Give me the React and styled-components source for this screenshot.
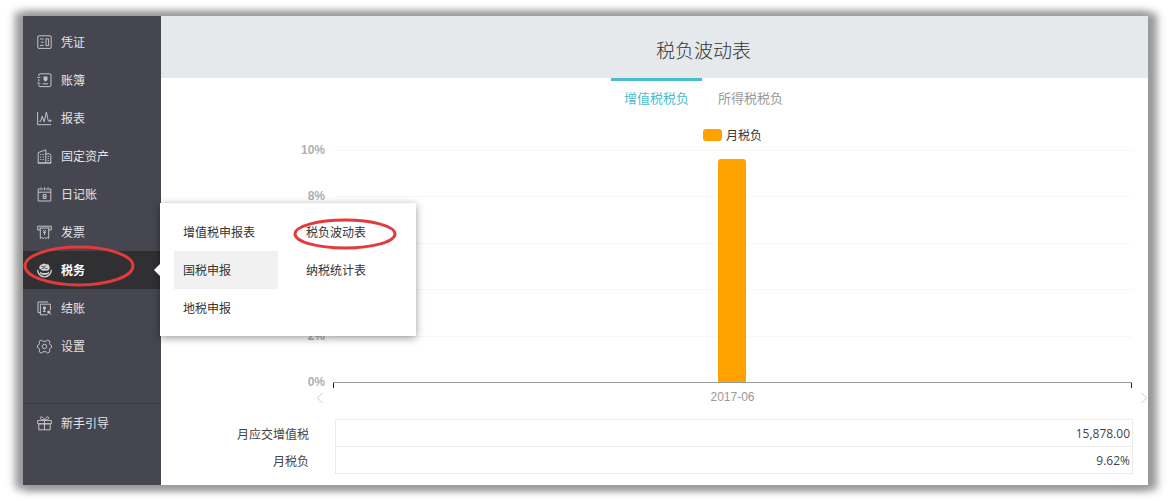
import styled, { createGlobalStyle, css } from 'styled-components'
import { useState } from 'react';

const ticks = ['10%', '8%', '6%', '4%', '2%', '0%'];
const tickGap = 46.4;
const taxMenu = ['增值税申报表', '税负波动表', '国税申报', '纳税统计表', '地税申报'];

const menuItems = [
  { name: '凭证', icon: <VoucherIcon /> },
  { name: '账簿', icon: <BookIcon /> },
  { name: '报表', icon: <ReportIcon /> },
  { name: '固定资产', icon: <AssetIcon /> },
  { name: '日记账', icon: <DiaryIcon /> },
  { name: '发票', icon: <InvoiceIcon /> },
  { name: '税务', icon: <TaxIcon />, children: taxMenu },
  { name: '结账', icon: <CloseBookIcon /> },
  { name: '设置', icon: <SettingIcon /> },
];

function App() {
  const [activeTab, setActiveTab] = useState('增值税税负');

  return (
    <Page>
      <GlobalStyle />
      <Frame>
        <Sidebar>
          <MenuList>
            {menuItems.map((item) => (
              <MenuItem key={item.name}>
                <MenuLink href="#" $active={!!item.children}>
                  {item.icon}
                  {item.name}
                </MenuLink>
                {item.children && (
                  <>
                    <ItemRing viewBox="0 0 112 42" aria-hidden="true">
                      <ellipse cx="56" cy="21" rx="54" ry="19" />
                    </ItemRing>
                    <SubMenu>
                      {item.children.map((child) => (
                        <SubLink href="#" key={child} $hover={child === '国税申报'}>
                          {child}
                          {child === '税负波动表' && (
                            <SubRing viewBox="0 0 104 32" aria-hidden="true">
                              <ellipse cx="52" cy="16" rx="50" ry="14" />
                            </SubRing>
                          )}
                        </SubLink>
                      ))}
                    </SubMenu>
                  </>
                )}
              </MenuItem>
            ))}
          </MenuList>
          <Guide>
            <MenuLink href="#">
              <GiftIcon />
              新手引导
            </MenuLink>
          </Guide>
        </Sidebar>

        <Main>
          <Header>
            <Title>税负波动表</Title>
          </Header>
          <Tabs>
            {['增值税税负', '所得税税负'].map((tab) => (
              <Tab key={tab} $active={tab === activeTab} onClick={() => setActiveTab(tab)}>
                {tab}
              </Tab>
            ))}
          </Tabs>

          <ChartGrid>
            <Legend>
              <LegendMark />
              月税负
            </Legend>
            <Plot role="img" aria-label="月税负 2017-06 9.62%">
              {ticks.map((tick, index) => {
                const y = Math.round(index * tickGap) + 1;
                return (
                  <g key={tick}>
                    {index < 5 && <line x1="0" x2="100%" y1={y + 0.5} y2={y + 0.5} stroke="#f7f7f7" />}
                    <text x="-8" y={y + 4} textAnchor="end">{tick}</text>
                  </g>
                );
              })}
              <svg x="50%" overflow="visible">
                <path d="M-14.5 233V13a3 3 0 0 1 3-3h22a3 3 0 0 1 3 3V233z" fill="#ffa200" />
              </svg>
              <rect x="0" y="233" width="100%" height="1" fill="#999" />
              <rect x="0" y="234" width="1" height="5" fill="#222" />
              <svg x="100%" overflow="visible">
                <rect x="-1" y="234" width="1" height="5" fill="#222" />
              </svg>
            </Plot>
            <Prev aria-label="上一页">
              <svg width="8" height="12" viewBox="0 0 8 12"><path d="M6.5 1L1.5 6l5 5" /></svg>
            </Prev>
            <Month>2017-06</Month>
            <Next aria-label="下一页">
              <svg width="8" height="12" viewBox="0 0 8 12"><path d="M1.5 1l5 5-5 5" /></svg>
            </Next>
          </ChartGrid>

          <DataTable>
            <tbody>
              <tr>
                <th scope="row">月应交增值税</th>
                <td>15,878.00</td>
              </tr>
              <tr>
                <th scope="row">月税负</th>
                <td>9.62%</td>
              </tr>
            </tbody>
          </DataTable>
        </Main>
      </Frame>
    </Page>
  );
}

export default App;


/* Icons */
function VoucherIcon() {
  return (
    <Icon viewBox="0 0 15 15">
      <rect x=".8" y=".8" width="13.4" height="12.6" rx="1.2" />
      <path d="M3 4h3.6M4 7.2h2.6M3 10.4h3.6M9 3.8h2.6v6.8H9z" />
    </Icon>
  );
}

function BookIcon() {
  return (
    <Icon viewBox="0 0 15 15">
      <path d="M1.8 3V2A1.2 1.2 0 0 1 3 .8h9.8A1.2 1.2 0 0 1 14 2v10.400a1.200 1.200 0 0 1-1.200 1.200H3a1.200 1.200 0 0 1-1.200-1.200v-1M1.800 6v2.600M.3 4.400h3M.3 10.200h3M5.500 10.800h5.500" />
      <path d="M6.500 3.600h4v3.200l-1.300 1.400H7.800L6.500 6.800z" fill="currentColor" stroke="none" />
    </Icon>
  );
}

function ReportIcon() {
  return (
    <Icon viewBox="0 0 15 15">
      <path d="M.6 1v12.700h13.600M2.300 10.400h1.300l1.600-5.200 2 5.600L9.400 1l1.900 9h1.300" />
      <circle cx="13.400" cy="9.700" r=".7" fill="currentColor" />
    </Icon>
  );
}

function AssetIcon() {
  return (
    <Icon viewBox="0 0 15 15">
      <path d="M1.200 14V3.600L8.800.8V14zM8.800 4.800h3.800l1.200 1.400V14H8.800M.6 14h13.800" />
      <path d="M3.200 5.500h1.200M5.700 5.500h1.200M3.200 8h1.200M5.700 8h1.200M3.200 10.500h1.200M5.700 10.500h1.200M10.600 7.500h1.200M10.600 9.500h1.200M10.600 11.500h1.200" />
    </Icon>
  );
}

function DiaryIcon() {
  return (
    <Icon viewBox="0 0 15 15">
      <path d="M3 2H1.200v12h12.600V2H12M1.200 5.200h12.600M5 2h1.200M8.600 2H10M4 .3v3M7.500.3v3M11 .3v3" />
      <path d="M6.200 7.500h2.800v4H6.200zM6.200 9.500H9" />
    </Icon>
  );
}

function InvoiceIcon() {
  return (
    <Icon viewBox="0 0 15 15">
      <path d="M3 5H.7V1.200h13.600V5H12M2.500 3h10M3.300 3v10.500l1.500-1 1.400 1 1.400-1 1.400 1 1.400-1 1.300 1V3" />
      <path d="M6 5l1.500 1.800L9 5M7.500 6.800V10M6 7.300h3" />
    </Icon>
  );
}

function TaxIcon() {
  return (
    <Icon viewBox="0 0 15 15">
      <path d="M.7 6.800c0 4 2.800 7 6.800 7s6.800-3 6.800-7" strokeWidth="1.300" />
      <path d="M3 8.600c1.600 2 7.400 2 9 0v1.700c-2 2.200-7 2.200-9 0z" fill="currentColor" stroke="none" />
      <path d="M3 2.300L6.800.6l5 1.200 1 3.100-1.500 2.500-5.800.4L2 5.300z" fill="currentColor" stroke="none" />
      <path d="M4 3l3 1 2-1.600M4.600 5.800l2.600-1 3.300 1" stroke="#303033" strokeWidth=".7" />
    </Icon>
  );
}

function CloseBookIcon() {
  return (
    <Icon viewBox="0 0 15 15">
      <path d="M11 1H1v10.600h2.400M3.400 3.200h10v6M3.400 3.200v10.600h7.200" />
      <path d="M6 5.600h2.800v2.800H6z" fill="currentColor" stroke="none" />
      <path d="M7.400 8v2.400M5.800 10.400h3" />
      <circle cx="11.800" cy="11" r="1.600" fill="currentColor" stroke="none" />
      <path d="M12.600 12l1.600 1.600" />
    </Icon>
  );
}

function SettingIcon() {
  return (
    <Icon viewBox="0 0 15 15">
      <path d="M4.400 1l1.700 1.300h2.800L10.600 1l2.200 1.300-.3 2.200.8 1.400 1.300.6v2l-1.300.6-.8 1.400.3 2.200-2.200 1.300-1.700-1.300H6.100L4.400 14l-2.200-1.300.3-2.200-.8-1.400-1.300-.6v-2l1.300-.6.8-1.400-.3-2.200z" />
      <circle cx="7.500" cy="7.500" r="2.200" />
    </Icon>
  );
}

function GiftIcon() {
  return (
    <Icon viewBox="0 0 15 15">
      <path d="M.7 4.400h13.600v3.400H.7zM1.800 7.800h11.400v6H1.800zM7.500 4.400v9.400M7.500 4.200C6 4.200 2.800 3.400 3.300 1.600S6.800 1.300 7.500 4.200c.7-2.900 3.700-4.400 4.200-2.600s-2.700 2.600-4.200 2.600z" />
    </Icon>
  );
}


/*Styled Components */
const GlobalStyle = createGlobalStyle`
  body {
    margin: 0;
    background: #fff;
    font-family: "Open Sans", "Noto Sans CJK SC", sans-serif;
    font-size: 12px;
    color: #444;
  }
  * {
    box-sizing: border-box;
  }
`;

const Page = styled.div`
  padding: 16px 24px 16px 23px;
`;

const Frame = styled.div`
  display: flex;
  background: #fff;
  box-shadow: -4px 0 8px 4px #999, 5px 1px 8px 4px #999;
`;

const Sidebar = styled.nav`
  width: 138px;
  flex-shrink: 0;
  padding-top: 7px;
  background: #464650;
`;

const MenuList = styled.ul`
  list-style: none;
  margin: 0;
  padding: 0;
`;

const MenuItem = styled.li`
  position: relative;
`;

const MenuLink = styled.a`
  display: flex;
  align-items: center;
  gap: 9px;
  height: 38px;
  padding-left: 14px;
  color: #e4e4e6;
  text-decoration: none;

  ${(props) => props.$active && css`
    background: #303033;
    color: #fff;
    font-weight: bold;
  `}
`;

const Icon = styled.svg`
  width: 15px;
  height: 15px;
  flex-shrink: 0;
  fill: none;
  stroke: currentColor;
  opacity: 0.8;
`;

const Guide = styled.div`
  margin-top: 38px;
  border-top: 1px solid #3b3b45;
`;

const ring = css`
  position: absolute;
  fill: none;
  stroke: #e33b3b;
  stroke-width: 3px;
  pointer-events: none;
`;

const ItemRing = styled.svg`
  ${ring}
  left: 0;
  top: -6px;
  width: 112px;
  height: 42px;
`;

const SubMenu = styled.div`
  position: absolute;
  z-index: 2;
  left: 137px;
  top: -48px;
  width: 256px;
  display: grid;
  grid-template-columns: 104px 104px;
  column-gap: 19px;
  padding: 10px 14px 9px;
  background: #fff;
  box-shadow: 0 2px 8px rgba(0, 0, 0, 0.4);

  &::before {
    content: '';
    position: absolute;
    left: -6px;
    top: 61px;
    border: 6px solid transparent;
    border-left-width: 0;
    border-right-color: #fff;
  }
`;

const SubLink = styled.a`
  position: relative;
  height: 38px;
  line-height: 40px;
  padding-left: 9px;
  color: #333;
  text-decoration: none;
  background: ${(props) => (props.$hover ? '#f1f1f1' : 'transparent')};
`;

const SubRing = styled.svg`
  ${ring}
  left: -4px;
  top: 5px;
  width: 104px;
  height: 32px;
`;

const Main = styled.main`
  flex: 1;
  min-width: 0;
  padding-bottom: 11px;
`;

const Header = styled.header`
  display: flex;
  justify-content: center;
  align-items: center;
  height: 62px;
  padding: 6px 0 0 98px;
  background: #e5e9ec;
`;

const Title = styled.h1`
  margin: 0;
  font-size: 19px;
  font-weight: 300;
  color: #333;
`;

const Tabs = styled.div`
  display: flex;
  justify-content: center;
  gap: 3px;
  padding-left: 98px;
`;

const Tab = styled.button`
  height: 38px;
  padding: 0 13px 2px;
  border: none;
  border-top: 3px solid ${(props) => (props.$active ? '#4bbccf' : 'transparent')};
  background: none;
  font-family: inherit;
  font-size: 13px;
  color: ${(props) => (props.$active ? '#4bbccf' : '#999')};
  cursor: pointer;
`;

const ChartGrid = styled.div`
  display: grid;
  grid-template-columns: 172px 1fr 16px;
  margin-top: 10px;
`;

const Legend = styled.div`
  grid-column: 2;
  display: flex;
  justify-content: center;
  align-items: center;
  gap: 4px;
  height: 18px;
  margin-bottom: 5px;
  color: #333;
`;

const LegendMark = styled.span`
  width: 19px;
  height: 12px;
  border-radius: 3px;
  background: #ffa200;
`;

const Plot = styled.svg`
  grid-column: 2;
  width: 100%;
  height: 240px;
  overflow: visible;

  text {
    font-family: "Liberation Sans", Arial, sans-serif;
    font-size: 12px;
    font-weight: bold;
    fill: #b0b0b0;
  }
`;

const Arrow = styled.button`
  display: flex;
  align-items: center;
  height: 18px;
  padding: 0;
  border: none;
  background: none;
  cursor: pointer;

  path {
    fill: none;
    stroke: #ccc;
  }
`;

const Prev = styled(Arrow)`
  grid-column: 1;
  justify-content: flex-end;
  padding-right: 9px;
`;

const Next = styled(Arrow)`
  justify-content: flex-end;
`;

const Month = styled.div`
  line-height: 16px;
  text-align: center;
  font-family: "Liberation Sans", Arial, sans-serif;
  color: #999;
`;

const DataTable = styled.table`
  width: 100%;
  margin-top: 12px;
  padding-right: 15px;
  border-spacing: 0;

  th {
    width: 174px;
    padding: 2px 26px 0 0;
    text-align: right;
    font-weight: normal;
  }

  td {
    height: 27px;
    padding: 0 2px;
    border: 1px solid #ebebeb;
    border-bottom: none;
    text-align: right;
  }

  tr:last-child td {
    height: 28px;
    border-bottom: 1px solid #ebebeb;
  }
`;
